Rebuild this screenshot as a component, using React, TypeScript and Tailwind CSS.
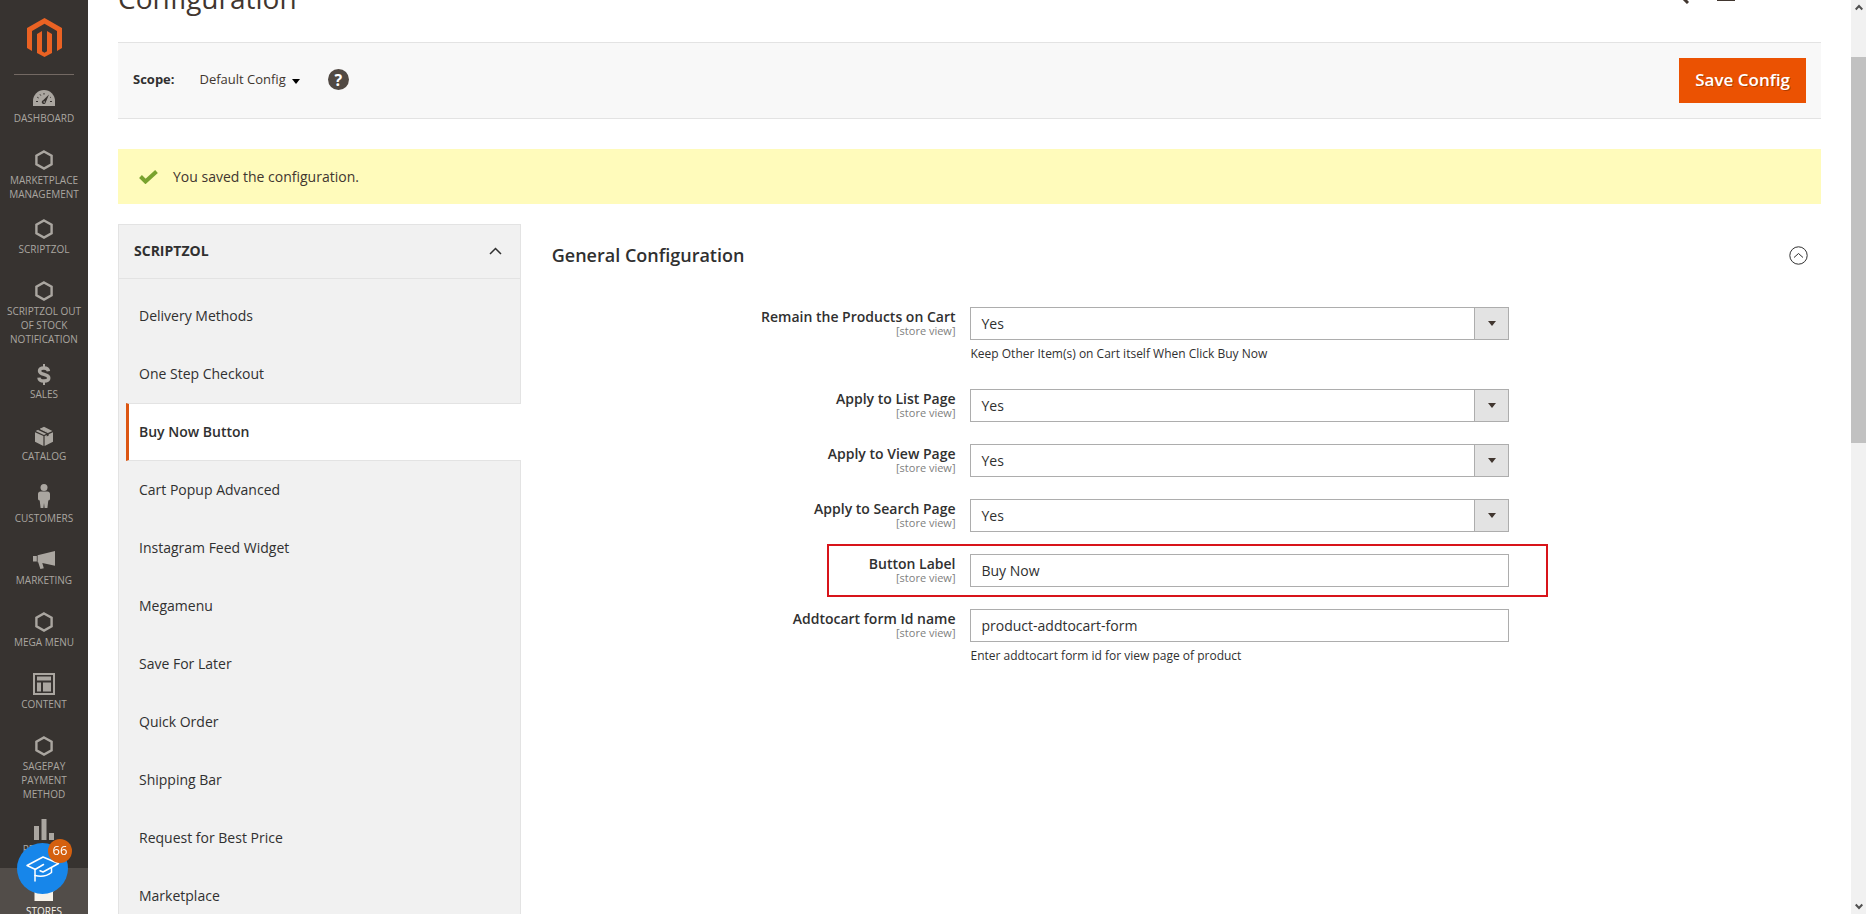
import { useState, type ReactNode } from "react";

type Field = {
  id: string;
  label: string;
  kind: "select" | "text";
  value: string;
  note?: string;
  highlighted?: boolean;
};

const FIELDS: Field[] = [
  {
    id: "remain",
    label: "Remain the Products on Cart",
    kind: "select",
    value: "Yes",
    note: "Keep Other Item(s) on Cart itself When Click Buy Now",
  },
  { id: "list-page", label: "Apply to List Page", kind: "select", value: "Yes" },
  { id: "view-page", label: "Apply to View Page", kind: "select", value: "Yes" },
  { id: "search-page", label: "Apply to Search Page", kind: "select", value: "Yes" },
  { id: "button-label", label: "Button Label", kind: "text", value: "Buy Now", highlighted: true },
  {
    id: "form-id",
    label: "Addtocart form Id name",
    kind: "text",
    value: "product-addtocart-form",
    note: "Enter addtocart form id for view page of product",
  },
];

const TABS = [
  "Delivery Methods",
  "One Step Checkout",
  "Buy Now Button",
  "Cart Popup Advanced",
  "Instagram Feed Widget",
  "Megamenu",
  "Save For Later",
  "Quick Order",
  "Shipping Bar",
  "Request for Best Price",
  "Marketplace",
];

function HexIcon() {
  return (
    <svg width="18" height="20" viewBox="0 0 18 20" fill="none" stroke="currentColor" strokeWidth="2.4">
      <path d="M9 1.5 16.6 5.8v8.4L9 18.5 1.4 14.2V5.8z" />
    </svg>
  );
}

function DashboardIcon() {
  return (
    <svg width="22" height="16" viewBox="0 0 22 16">
      <path fill="currentColor" d="M0 16v-5a11 11 0 0 1 22 0v5z" />
      <path
        d="M3 11.5h2M17 11.5h2M4.2 7.2l1.5.8M7 4.3l.8 1.3M11 3v1.6M17.8 7.2l-.8.5"
        stroke="#373330"
        strokeWidth="1"
      />
      <path fill="#373330" d="m16 4.5-3.3 8a2 2 0 1 1-2.6-2.3z" />
      <circle cx="11.2" cy="12" r=".8" fill="currentColor" />
    </svg>
  );
}

function DollarIcon() {
  return (
    <svg width="14" height="21" viewBox="0 0 14 21" fill="none" stroke="currentColor">
      <path
        strokeWidth="3.4"
        d="M11.5 7.2C11.2 5 9.7 4 7 4S2.5 5 2.5 7c0 4.4 9.3 2.4 9.3 7 0 2-2 3-4.8 3s-4.900-1-5.100-3.400"
      />
      <path strokeWidth="2" d="M7 0v4M7 17v4" />
    </svg>
  );
}

function BoxIcon() {
  return (
    <svg width="18" height="20" viewBox="0 0 18 20" fill="currentColor">
      <path d="M0 6.2 8.4 10v10L0 15.8zM18 6.2 9.6 10v10l8.400-4.200z" />
      <path d="M.6 5 3.8 3.4l8.400 3.900L9 8.900zM5 2.800 9 .8l8.400 4.200-3.900 1.800z" />
      <path d="m2.500 3.700 2.200-1.200 9 4.300v2.800l-2 .8V7.900z" fill="#373330" />
      <path d="m5.300 2.700 8.200 4" stroke="currentColor" strokeWidth="1.2" />
    </svg>
  );
}

function PersonIcon() {
  return (
    <svg width="12" height="24" viewBox="0 0 12 24" className="mb-1" fill="currentColor">
      <circle cx="6" cy="3.6" r="3.5" />
      <path d="M2.500 7.600h7C11 7.600 12 8.600 12 10v4.500c0 1.300-.6 2-1.700 2L9.400 24H6.600L6 19l-.6 5H2.600l-.9-7.500C.6 16.500 0 15.800 0 14.500V10c0-1.400 1-2.400 2.500-2.400z" />
    </svg>
  );
}

function MegaphoneIcon() {
  return (
    <svg width="22" height="18" viewBox="0 0 22 18" fill="currentColor">
      <path d="M0 5h3.800v5.500H0zM4.600 4.200 22 0v14.800L9.300 12l1.500 5.300-3.400.7-2.200-6.800h-.6z" />
    </svg>
  );
}

function ContentIcon() {
  return (
    <svg width="22" height="22" viewBox="0 0 22 22">
      <path d="M1 1h20v20H1z" fill="none" stroke="currentColor" strokeWidth="2" />
      <path d="M4 3.500h14v4H4zM4 9.500h4v9H4zM10 9.500h8v9h-8z" fill="currentColor" />
    </svg>
  );
}

function BarsIcon() {
  return (
    <svg width="20" height="21" viewBox="0 0 20 21" fill="currentColor">
      <path d="M0 7h5v14H0zM7.500 0h5v21h-5zM15 14h5v7h-5z" />
    </svg>
  );
}

function StoreIcon() {
  return (
    <svg width="22" height="20" viewBox="0 0 22 20" fill="currentColor">
      <path d="M3 0h16l3 7.500c0 2-1 3-2 3V20H1.500v-9.500C.8 10.500 0 9.500 0 7.500z" />
    </svg>
  );
}

function MagentoLogo() {
  return (
    <svg width="35" height="39" viewBox="0 0 35 39" fill="#ea6223">
      <path d="M17.500 0 35 10v20l-5 3V13L17.500 5.800 5 13v20l-5-3V10z" />
      <path d="m10 16 5-3v20.200l2.500 1.500 2.500-1.500V13l5 3v18.900L17.500 39 10 34.900z" />
    </svg>
  );
}

const MENU: { label: string; icon: ReactNode; active?: boolean }[] = [
  { label: "Dashboard", icon: <DashboardIcon /> },
  { label: "Marketplace Management", icon: <HexIcon /> },
  { label: "Scriptzol", icon: <HexIcon /> },
  { label: "Scriptzol Out of Stock Notification", icon: <HexIcon /> },
  { label: "Sales", icon: <DollarIcon /> },
  { label: "Catalog", icon: <BoxIcon /> },
  { label: "Customers", icon: <PersonIcon /> },
  { label: "Marketing", icon: <MegaphoneIcon /> },
  { label: "Mega Menu", icon: <HexIcon /> },
  { label: "Content", icon: <ContentIcon /> },
  { label: "Sagepay Payment Method", icon: <HexIcon /> },
  { label: "Reports", icon: <BarsIcon /> },
  { label: "Stores", icon: <StoreIcon />, active: true },
];

function SideMenu() {
  return (
    <nav className="h-full w-[88px] shrink-0 overflow-hidden bg-[#373330]">
      <a
        href="#home"
        aria-label="Magento Admin"
        className="mx-[14px] flex h-[75px] justify-center border-b border-[#736963] pt-[18px]"
      >
        <MagentoLogo />
      </a>
      <ul>
        {MENU.map((item) => (
          <li key={item.label}>
            <a
              href="#menu"
              className={`block min-h-[62px] px-1 pt-2.5 pb-[5px] text-center text-[10px] leading-[14px] uppercase ${
                item.active ? "bg-[#524d49] text-[#f7f3eb]" : "text-[#aaa6a0]"
              }`}
            >
              <span className="flex h-[26px] items-center justify-center">{item.icon}</span>
              {item.label}
            </a>
          </li>
        ))}
      </ul>
    </nav>
  );
}

/* Floating guide launcher, pinned over the bottom of the side menu. */
function GuideButton() {
  return (
    <button
      aria-label="Open guide"
      className="fixed bottom-5 left-[17px] grid size-[51px] place-items-center rounded-full bg-[#1786ea]"
    >
      <svg
        width="34"
        height="26"
        viewBox="0 0 34 26"
        fill="none"
        stroke="#fff"
        strokeWidth="1.5"
        strokeLinejoin="round"
        strokeLinecap="round"
      >
        <path d="M9.500 13.500 1 9.500 17 1l15.500 6.500L17 16l-3-1.300" />
        <path d="M17.500 8.500 9 13.500V25" />
        <path d="M9 19.500c6 1.500 12 .5 16.500-3V12" />
      </svg>
      <span className="absolute -top-1 -right-1 grid size-6 place-items-center rounded-full bg-[#d4600f] text-[13px] text-white">
        66
      </span>
    </button>
  );
}

function ScopeBar() {
  return (
    <div className="flex h-[77px] items-center border-y border-[#e3e3e3] bg-[#f8f8f8] px-[15px] text-[13px] text-[#303030]">
      <div className="flex items-center pb-0.5">
        <span className="font-bold">Scope:</span>
        <button className="ml-[25px] flex items-center gap-1.5 text-[#41362f]">
          Default Config
          <svg width="8" height="5" viewBox="0 0 8 5" className="mt-1">
            <path d="M0 0h8L4 5z" fill="#000" />
          </svg>
        </button>
        <button
          aria-label="Help"
          className="ml-7 grid size-[21px] place-items-center rounded-full bg-[#514943] text-base leading-none font-bold text-white"
        >
          ?
        </button>
      </div>
      <button className="ml-auto h-[45px] bg-[#eb5202] px-4 pb-0.5 text-[17px] font-semibold text-white [text-shadow:1px_1px_0_rgba(0,0,0,0.25)]">
        Save Config
      </button>
    </div>
  );
}

function ConfigTabs() {
  const [active, setActive] = useState("Buy Now Button");

  return (
    <aside className="w-[23.65%] shrink-0 self-stretch text-sm text-[#303030]">
      <button className="flex h-[55px] w-full items-center justify-between border border-[#e3e3e3] bg-[#f1f1f1] pr-[18px] pb-0.5 pl-[15px] font-bold uppercase">
        Scriptzol
        <svg width="13" height="8" viewBox="0 0 13 8" fill="none" stroke="#303030" strokeWidth="1.5">
          <path d="m1 7 5.500-5.500L12 7" />
        </svg>
      </button>
      <ul className="border-l border-[#e3e3e3] bg-[#f1f1f1]">
        <li className="h-2 border-r border-[#e3e3e3]" />
        {TABS.map((tab) => (
          <li key={tab} className={`pl-[7px] ${tab === active ? "" : "border-r border-[#e3e3e3]"}`}>
            <a
              href="#tab"
              onClick={() => setActive(tab)}
              className={`flex h-[58px] items-center border-l-[3px] pl-[10px] ${
                tab === active
                  ? "border-y border-y-[#e3e3e3] border-l-[#dc5511] bg-white font-semibold"
                  : "border-l-transparent"
              }`}
            >
              {tab}
            </a>
          </li>
        ))}
      </ul>
    </aside>
  );
}

function FieldRow({ field }: { field: Field }) {
  const [value, setValue] = useState(field.value);

  return (
    <div className="relative grid grid-cols-[404fr_15fr_539fr_299fr]">
      <label htmlFor={field.id} className="pt-px text-right text-sm leading-[17px] font-semibold text-[#303030]">
        {field.label}
        <span className="block text-[11px] leading-3 font-normal text-[#808080]">[store view]</span>
      </label>
      <div className="col-start-3 text-[#303030]">
        {field.kind === "select" ? (
          <div className="relative">
            <select
              id={field.id}
              value={value}
              onChange={(e) => setValue(e.target.value)}
              className="h-[33px] w-full appearance-none border border-[#adadad] bg-white px-2.5 text-sm"
            >
              <option>Yes</option>
              <option>No</option>
            </select>
            <span className="pointer-events-none absolute inset-y-0 right-0 grid w-[35px] place-items-center border border-[#adadad] bg-[#e3e3e3]">
              <svg width="8" height="5" viewBox="0 0 8 5">
                <path d="M0 0h8L4 5z" fill="#41362f" />
              </svg>
            </span>
          </div>
        ) : (
          <input
            id={field.id}
            type="text"
            value={value}
            onChange={(e) => setValue(e.target.value)}
            className="block h-[33px] w-full border border-[#adadad] bg-white px-2.5 text-sm"
          />
        )}
        {field.note && <p className="mt-1.5 mb-[5px] text-xs leading-4">{field.note}</p>}
      </div>
      {field.highlighted && (
        <div className="pointer-events-none absolute -inset-y-2.5 right-[20.7%] left-[21.9%] border-2 border-[#d8141a]" />
      )}
    </div>
  );
}

function Scrollbar() {
  return (
    <div aria-hidden="true" className="flex h-full w-[15px] shrink-0 flex-col items-center bg-[#f1f1f1]">
      <svg
        width="8"
        height="7"
        viewBox="0 0 8 7"
        className="mt-1 mb-[46px] shrink-0"
        fill="none"
        stroke="#505050"
        strokeWidth="2"
      >
        <path d="m.7 5.500 3.300-3.500 3.300 3.500" />
      </svg>
      <div className="h-[386px] w-full bg-[#c1c1c1]" />
      <svg
        width="8"
        height="7"
        viewBox="0 0 8 7"
        className="mt-auto mb-1 shrink-0"
        fill="none"
        stroke="#505050"
        strokeWidth="2"
      >
        <path d="m.7 1.500 3.300 3.500 3.300-3.500" />
      </svg>
    </div>
  );
}

export default function App() {
  return (
    <div className="flex h-screen overflow-hidden bg-white font-['Open_Sans','Noto_Sans',sans-serif]">
      <SideMenu />
      <main className="min-w-0 flex-1 overflow-hidden px-[30px]">
        <header className="flex h-[42px] items-end">
          <h1 className="pb-[25px] text-[28px] leading-[38px] text-[#41362f]">Configuration</h1>
          <div className="mr-[86px] ml-auto flex items-end gap-7 text-[#41362f]">
            <button aria-label="Search" className="pb-[38px]">
              <svg width="20" height="20" viewBox="0 0 20 20" fill="none" stroke="currentColor" strokeWidth="3">
                <circle cx="8" cy="8" r="6" />
                <path d="m12.500 12.500 6.500 6.500" />
              </svg>
            </button>
            <button aria-label="Notifications" className="pb-[41px]">
              <svg width="18" height="20" viewBox="0 0 18 20" fill="currentColor">
                <path d="M9 0c4 0 6 3 6 7v7l3 4v2H0v-2l3-4V7c0-4 2-7 6-7z" />
              </svg>
            </button>
          </div>
        </header>
        <ScopeBar />
        <div
          role="status"
          className="mt-[30px] flex h-[55px] items-center bg-[#fffbbb] pl-[21px] text-sm text-[#41362f]"
        >
          <svg
            width="19"
            height="14"
            viewBox="0 0 19 14"
            fill="none"
            stroke="#79a22e"
            strokeWidth="4"
            className="mr-[15px]"
          >
            <path d="m1.500 6.500 5 5L17.500 1.500" />
          </svg>
          You saved the configuration.
        </div>
        <div className="mt-5 flex gap-[31px]">
          <ConfigTabs />
          <section className="min-w-0 flex-1 pr-[13px]">
            <div className="flex h-[62px] items-center justify-between">
              <h2 className="text-lg font-semibold text-[#303030]">General Configuration</h2>
              <button aria-label="Collapse section">
                <svg width="19" height="19" viewBox="0 0 19 19" fill="none" stroke="#303030">
                  <circle cx="9.5" cy="9.5" r="8.7" />
                  <path d="m5 11.500 4.500-4 4.500 4" />
                </svg>
              </button>
            </div>
            <form className="mt-[21px] flex flex-col gap-[22px]">
              {FIELDS.map((field) => (
                <FieldRow key={field.id} field={field} />
              ))}
            </form>
          </section>
        </div>
      </main>
      <Scrollbar />
      <GuideButton />
    </div>
  );
}
